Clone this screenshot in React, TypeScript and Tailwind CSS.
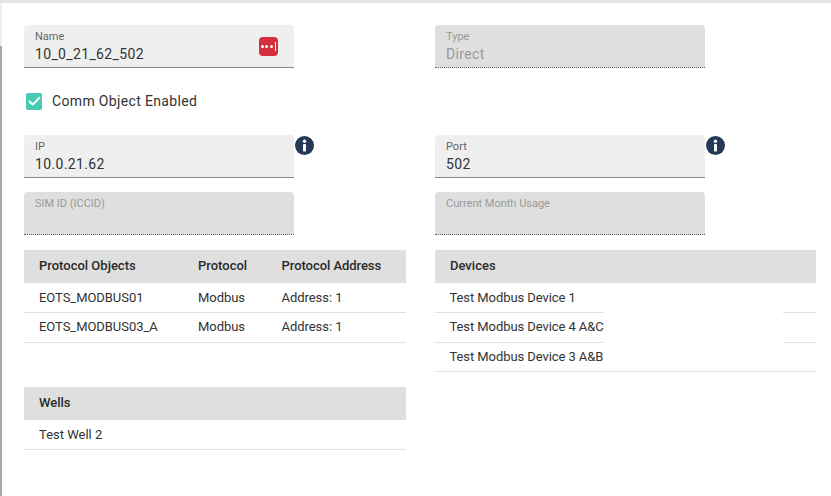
import { Check } from "lucide-react";

function Field({
  label,
  value,
  disabled,
  children,
}: {
  label: string;
  value?: string;
  disabled?: boolean;
  children?: React.ReactNode;
}) {
  return (
    <div
      className={`relative h-[43px] w-[270px] rounded-t-[4px] px-[11px] pt-[5px] ${
        disabled
          ? "border-b border-dotted border-b-[#666] bg-[#dfdfdf] text-[#9a9a9a]"
          : "border-b border-b-[#888] bg-[#efefef] text-[#333]"
      }`}
    >
      <div className={`text-[11px] leading-[13px] ${disabled ? "" : "text-[#666]"}`}>{label}</div>
      <div className="mt-[2px] text-[14px] leading-[19px] tracking-[0.35px]">{value}</div>
      {children}
    </div>
  );
}

function Info() {
  return (
    <svg viewBox="0 0 19 19" className="ml-[1px] mt-[1px] h-[19px] w-[19px] text-[#253858]">
      <circle cx="9.5" cy="9.5" r="9.5" fill="currentColor" />
      <circle cx="9.5" cy="5.2" r="1.7" fill="white" />
      <rect x="8" y="8" width="3" height="7.5" rx="0.8" fill="white" />
    </svg>
  );
}

function HeadRow({ children }: { children: React.ReactNode }) {
  return (
    <div className="flex h-[33px] items-center bg-[#dfdfdf] pb-[1px] pl-[15px] text-[13px] font-medium text-[#2a2a2a]">
      {children}
    </div>
  );
}

function Row({ cells, raised }: { cells: string[]; raised?: boolean }) {
  return (
    <div
      className={`flex h-[30px] items-center border-b border-b-[#e0e0e0] pl-[15px] text-[13px] tracking-[-0.05px] text-[#333] ${
        raised ? "pb-[2px]" : ""
      }`}
    >
      <div className="w-[159px]">{cells[0]}</div>
      <div className="w-[83.5px]">{cells[1]}</div>
      <div>{cells[2]}</div>
    </div>
  );
}

function DeviceRow({ name, last, raised }: { name: string; last?: boolean; raised?: boolean }) {
  if (last) {
    return (
      <div className="flex h-[29px] items-center border-b border-b-[#e0e0e0] pl-[14.5px] text-[13px] tracking-[-0.08px] text-[#333]">
        {name}
      </div>
    );
  }
  // divider is broken in the middle of these rows
  return (
    <div className="flex h-[30px] text-[13px] tracking-[-0.08px] text-[#333]">
      <div
        className={`flex w-[169px] items-center whitespace-nowrap border-b border-b-[#e0e0e0] pl-[14.5px] ${
          raised ? "pb-[2px]" : ""
        }`}
      >
        {name}
      </div>
      <div className="flex-1" />
      <div className="w-[33px] border-b border-b-[#e0e0e0]" />
    </div>
  );
}

export default function App() {
  return (
    <div
      className="flex h-[496px] w-[831px] flex-col overflow-hidden bg-white"
      style={{ fontFamily: "Roboto, sans-serif" }}
    >
      <div className="h-[3px] shrink-0 bg-[#e4e4e4]" />
      <div className="flex flex-1">
        {/* left rail */}
        <div className="flex w-[2px] shrink-0 flex-col">
          <div className="h-[43px] bg-[#eeeeee]" />
          <div className="flex-1 bg-[#a9a9a9]" />
        </div>

        <div className="flex flex-1 gap-[29px] pl-[22px] pr-[15px] pt-[22px]">
          {/* left column */}
          <div className="flex w-[382px] flex-col">
            <Field label="Name" value="10_0_21_62_502">
              <div className="absolute left-[235px] top-[12px] flex h-[19px] w-[19px] items-center justify-center gap-[1.5px] rounded-[4px] bg-[#d32f3f]">
                <span className="h-[3px] w-[3px] rounded-full bg-white" />
                <span className="h-[3px] w-[3px] rounded-full bg-white" />
                <span className="h-[3px] w-[3px] rounded-full bg-white" />
                <span className="ml-[1px] h-[9px] w-[1px] bg-white" />
              </div>
            </Field>
            <div className="mt-[25px] flex h-[17px] items-center text-[14px] tracking-[0.35px] text-[#333]">
              <div className="ml-[2px] flex h-[17px] w-[16px] items-center justify-center rounded-[2px] bg-[#48c9b4]">
                <Check className="h-[15px] w-[15px] text-white" strokeWidth={3} />
              </div>
              <span className="ml-[10px]">Comm Object Enabled</span>
            </div>
            <div className="mt-[25px] flex">
              <Field label="IP" value="10.0.21.62" />
              <Info />
            </div>
            <div className="mt-[14px]">
              <Field label="SIM ID (ICCID)" disabled />
            </div>
            <div className="mt-[15px]">
              <HeadRow>
                <div className="w-[159px]">Protocol Objects</div>
                <div className="w-[83.5px]">Protocol</div>
                <div className="tracking-[-0.05px]">Protocol Address</div>
              </HeadRow>
              <Row cells={["EOTS_MODBUS01", "Modbus", "Address: 1"]} />
              <Row cells={["EOTS_MODBUS03_A", "Modbus", "Address: 1"]} raised />
            </div>
            <div className="mt-[44px]">
              <HeadRow>Wells</HeadRow>
              <div className="flex h-[30px] items-center border-b border-b-[#e0e0e0] pl-[15px] text-[13px] text-[#333]">
                Test Well 2
              </div>
            </div>
          </div>

          {/* right column */}
          <div className="flex flex-1 flex-col">
            <Field label="Type" value="Direct" disabled />
            <div className="mt-[67px] flex">
              <Field label="Port" value="502" />
              <Info />
            </div>
            <div className="mt-[14px]">
              <Field label="Current Month Usage" disabled />
            </div>
            <div className="mt-[15px]">
              <HeadRow>Devices</HeadRow>
              <DeviceRow name="Test Modbus Device 1" />
              <DeviceRow name="Test Modbus Device 4 A&C" raised />
              <DeviceRow name="Test Modbus Device 3 A&B" last />
            </div>
          </div>
        </div>
      </div>
    </div>
  );
}
